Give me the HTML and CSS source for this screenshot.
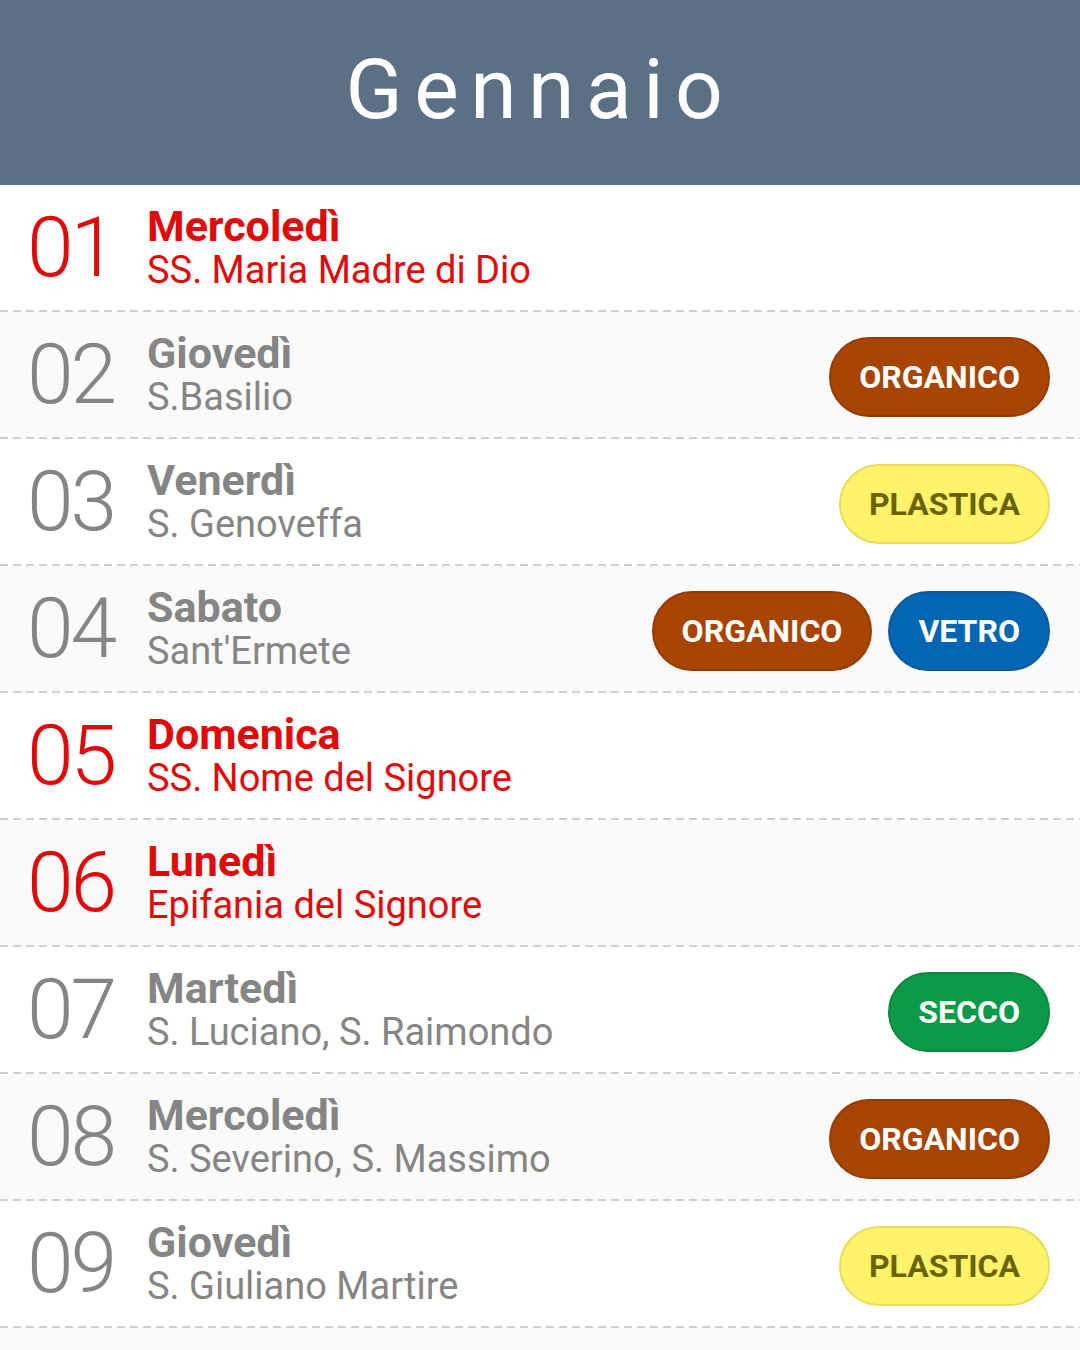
FILE: index.html
```html
<!DOCTYPE html>
<html lang="it">
<head>
<meta charset="utf-8">
<title>Gennaio</title>
<link rel="stylesheet" href="styles.css">
</head>
<body>
<header class="month">
  <h1 class="month-title">Gennaio</h1>
</header>
<ul class="days">
  <li class="day holiday">
    <span class="num">01</span>
    <div class="info"><span class="wd">Mercoledì</span><span class="saint">SS. Maria Madre di Dio</span></div>
    <div class="tags"></div>
  </li>
  <li class="day alt">
    <span class="num">02</span>
    <div class="info"><span class="wd">Giovedì</span><span class="saint">S.Basilio</span></div>
    <div class="tags"><span class="tag organico">ORGANICO</span></div>
  </li>
  <li class="day">
    <span class="num">03</span>
    <div class="info"><span class="wd">Venerdì</span><span class="saint">S. Genoveffa</span></div>
    <div class="tags"><span class="tag plastica">PLASTICA</span></div>
  </li>
  <li class="day alt">
    <span class="num">04</span>
    <div class="info"><span class="wd">Sabato</span><span class="saint">Sant'Ermete</span></div>
    <div class="tags"><span class="tag organico">ORGANICO</span><span class="tag vetro">VETRO</span></div>
  </li>
  <li class="day holiday">
    <span class="num">05</span>
    <div class="info"><span class="wd">Domenica</span><span class="saint">SS. Nome del Signore</span></div>
    <div class="tags"></div>
  </li>
  <li class="day alt holiday">
    <span class="num">06</span>
    <div class="info"><span class="wd">Lunedì</span><span class="saint">Epifania del Signore</span></div>
    <div class="tags"></div>
  </li>
  <li class="day">
    <span class="num">07</span>
    <div class="info"><span class="wd">Martedì</span><span class="saint">S. Luciano, S. Raimondo</span></div>
    <div class="tags"><span class="tag secco">SECCO</span></div>
  </li>
  <li class="day alt">
    <span class="num">08</span>
    <div class="info"><span class="wd">Mercoledì</span><span class="saint">S. Severino, S. Massimo</span></div>
    <div class="tags"><span class="tag organico">ORGANICO</span></div>
  </li>
  <li class="day">
    <span class="num">09</span>
    <div class="info"><span class="wd">Giovedì</span><span class="saint">S. Giuliano Martire</span></div>
    <div class="tags"><span class="tag plastica">PLASTICA</span></div>
  </li>
</ul>
</body>
</html>
```

FILE: styles.css
```css
* { box-sizing: border-box; }
html, body {
  margin: 0;
  padding: 0;
  background: #fafafa;
  font-family: Roboto, "Noto Sans", "Liberation Sans", sans-serif;
}
.month {
  height: 185px;
  background: #5b6f85;
  display: flex;
  align-items: center;
  justify-content: center;
}
.month-title {
  margin: 0;
  padding-bottom: 6px;
  color: #ffffff;
  font-weight: 400;
  font-size: 84px;
  line-height: 1;
  letter-spacing: 11.5px;
}
.days {
  list-style: none;
  margin: 0;
  padding: 0;
}
.day {
  height: 127px;
  padding: 0 30px 2px 30px;
  display: flex;
  align-items: center;
  background-color: #ffffff;
  background-image: repeating-linear-gradient(to right, #cfcfcf 0 8px, transparent 8px 13px);
  background-size: 100% 2px;
  background-position: left bottom;
  background-repeat: no-repeat;
  color: #858585;
}
.day.alt { background-color: #fafafa; }
.day.holiday { color: #e10a0a; }
.num {
  width: 117px;
  flex: none;
  margin-left: -3px;
  margin-right: 3px;
  font-size: 84px;
  font-weight: 300;
  line-height: 1;
  letter-spacing: -3px;
}
.info {
  flex: 1;
  display: flex;
  flex-direction: column;
  padding-top: 1px;
}
.wd {
  font-size: 43px;
  font-weight: 700;
  line-height: 44px;
}
.saint {
  font-size: 38px;
  font-weight: 400;
  line-height: 44px;
}
.tags {
  display: flex;
  gap: 16px;
  margin-top: 4px;
}
.tag {
  height: 80px;
  border-radius: 40px;
  padding: 0 28px;
  display: flex;
  align-items: center;
  font-size: 32px;
  font-weight: 700;
  color: #ffffff;
  border: 2px solid;
}
.organico { background: #a84300; border-color: #973c00; }
.plastica { background: #fff36a; border-color: #e8dc5a; color: #6b6300; }
.vetro { background: #0065b3; border-color: #0a5aa0; }
.secco { background: #0b9a48; border-color: #0a8a40; }
```
